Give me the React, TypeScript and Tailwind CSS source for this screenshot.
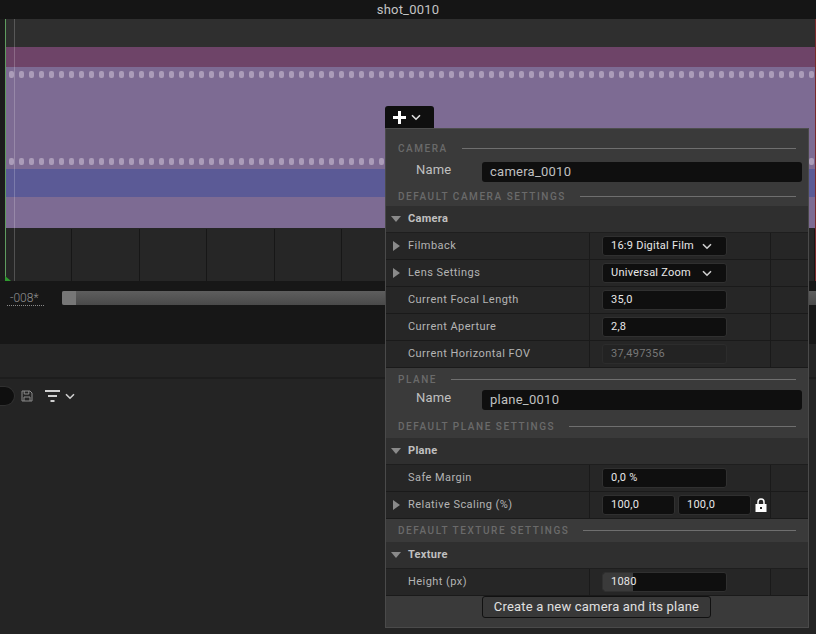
import React from 'react';

const TICKS = [66, 68, 67, 68, 67, 68, 67, 68, 67, 68, 67, 68];
const DOTS = Array.from({ length: 81 });

function Dots() {
  return (
    <div className="flex gap-[5px] pl-[3px] overflow-hidden">
      {DOTS.map((_, i) => (
        <span key={i} className="w-[5px] h-[7px] shrink-0 rounded-[2px] bg-[#ab9cb9]" />
      ))}
    </div>
  );
}

function Arrow({ open }: { open?: boolean }) {
  return (
    <svg width="12" height="12" viewBox="0 0 12 12" className="shrink-0">
      {open ? <path d="M1 3h10L6 9z" fill="#8a8a8a" /> : <path d="M3 1l7 5-7 5z" fill="#8a8a8a" />}
    </svg>
  );
}

function Chevron({ color = '#d0d0d0', w = 10 }: { color?: string; w?: number }) {
  return (
    <svg width={w} height="7" viewBox="0 0 10 7" className="shrink-0">
      <path d="M1 1.2l4 4 4-4" fill="none" stroke={color} strokeWidth="1.6" />
    </svg>
  );
}

function SectionTitle({ text, h, pt = 'pt-0' }: { text: string; h: string; pt?: string }) {
  return (
    <div className={`flex items-center gap-[14px] pl-3 pr-3 ${h} ${pt}`}>
      <span className="text-[10px] font-medium tracking-[1.55px] text-[#6a6a6a] whitespace-nowrap">{text}</span>
      <span className="flex-1 h-px bg-[#6f6f6f]" />
    </div>
  );
}

function NameRow({ value }: { value: string }) {
  return (
    <div className="flex items-start h-[24px] pr-[6px]">
      <span className="w-[96px] pl-[30px] text-[13px] leading-[20px] text-[#c0c0c0] tracking-[0.2px] shrink-0 -mt-[2px]">Name</span>
      <div className="flex-1 h-[20px] rounded-[3px] bg-[#0f0f0f] pl-2 text-[13px] leading-[20px] text-[#c0c0c0] tracking-[0.25px]">{value}</div>
    </div>
  );
}

function GroupHeader({ label, h = 'h-[27px]' }: { label: string; h?: string }) {
  return (
    <div className={`flex items-center ${h} pl-1 bg-[#2f2f2f] border-b border-[#1e1e1e]`}>
      <Arrow open />
      <span className="ml-[6px] text-[11px] font-bold tracking-[0.3px] text-[#c0c0c0]">{label}</span>
    </div>
  );
}

function Field({ children, w = 'w-[125px]', dim }: { children: React.ReactNode; w?: string; dim?: boolean }) {
  return (
    <div className={`flex items-center justify-between h-[20px] ${w} rounded-[3px] border pl-[8px] pr-[14px] text-[11px] tracking-[0.25px] ${dim ? 'bg-[#232323] border-[#2c2c2c] text-[#777]' : 'bg-[#0f0f0f] border-[#303030] text-[#e8e8e8]'}`}>
      {children}
    </div>
  );
}

function Row({ label, arrow, children }: { label: string; arrow?: boolean; children: React.ReactNode }) {
  return (
    <div className="flex h-[27px] bg-[#262626] border-b border-[#1a1a1a]">
      <div className="w-[204px] flex items-center pl-1 border-r border-[#1a1a1a]">
        {arrow ? <Arrow /> : <span className="w-[12px]" />}
        <span className="ml-[6px] text-[11px] tracking-[0.45px] text-[#b4b4b4] whitespace-nowrap">{label}</span>
      </div>
      <div className="w-[181px] flex items-center gap-[3px] pl-3 border-r border-[#1a1a1a]">{children}</div>
    </div>
  );
}

export default function App() {
  return (
    <div className="relative w-[816px] h-[634px] overflow-hidden bg-[#242424] font-['Roboto',sans-serif]">
      <div className="flex items-center justify-center h-[19px] bg-[#151515] text-[13px] text-[#c4c4c4] tracking-[0.2px]">shot_0010</div>

      <div className="relative flex h-[262px] bg-[#1c1c1c]">
        <div className="w-[5px] shrink-0" />
        <div className="w-px shrink-0 bg-[#5f9c5f]" />
        <div className="flex-1 flex flex-col">
          <div className="h-[28px] bg-[#2f2f2f]" />
          <div className="h-[20px] bg-[#6e4468]" />
          <div className="h-[102px] flex flex-col justify-between pt-[4px] pb-[4px] bg-[#7d6b93]">
            <Dots />
            <Dots />
          </div>
          <div className="h-[28px] bg-[#5b5a96]" />
          <div className="h-[31px] bg-[#7d6b93]" />
          <div className="flex h-[53px] bg-[#262626] pt-px">
            {TICKS.map((w, i) => (
              <div key={i} style={{ width: w }} className="shrink-0 border-r border-[#171717]" />
            ))}
          </div>
        </div>
        <div className="w-[3px] shrink-0 bg-[#1c1c1c] border-l border-[#7a2a2a]" />
        <div className="absolute left-[14px] top-0 bottom-0 w-px bg-white/20" />
        <svg width="6" height="5" viewBox="0 0 6 5" className="absolute left-[5px] bottom-0">
          <path d="M0 0l6 5H0z" fill="#2f9a2f" />
        </svg>
      </div>

      <div className="h-[63px] bg-[#171717] pt-[10px]">
        <div className="flex items-start">
          <div className="w-[62px] shrink-0 pl-[7px]">
            <span className="block w-[37px] pl-[3px] text-[12px] leading-[14px] font-light text-[#8f8f8f] border-b border-dotted border-[#8a8a8a]">-008*</span>
          </div>
          <div className="flex-1 h-[14px] rounded-l-[2px] overflow-hidden bg-gradient-to-b from-[#5e5e5e] to-[#4a4a4a]">
            <div className="w-[14px] h-full bg-[#777]" />
          </div>
        </div>
      </div>

      <div className="h-[35px] bg-[#242424] border-b-2 border-[#1d1d1d]" />

      <div className="flex items-center h-[20px] mt-[7px]">
        <div className="w-[15px] h-[20px] rounded-r-full bg-[#0f0f0f] border border-l-0 border-[#303030]" />
        <svg width="12" height="12" viewBox="0 0 12 12" className="ml-[6px]">
          <path d="M1 1h8l2 2v8H1z M3.2 1v3h4.6V1 M3 11V7h6v4" fill="none" stroke="#8a8a8a" strokeWidth="1" />
        </svg>
        <svg width="15" height="12" viewBox="0 0 15 12" className="ml-[12px]">
          <path d="M0 1h15M3 6h9M5.5 11h4" stroke="#d0d0d0" strokeWidth="2" />
        </svg>
        <span className="ml-[5px]"><Chevron /></span>
      </div>

      {/* add menu */}
      <div className="absolute left-[385px] top-[106px] w-[424px]">
        <div className="flex items-center gap-[5px] w-[49px] h-[23px] pl-[8px] rounded-t-[3px] bg-[#0f0f0f]">
          <svg width="13" height="13" viewBox="0 0 13 13">
            <path d="M5 0h3v5h5v3H8v5H5V8H0V5h5z" fill="#fff" />
          </svg>
          <Chevron color="#e0e0e0" />
        </div>

        <div className="border border-[#4a4a4a] border-t-[#4d4d4d] bg-[#3a3a3a] w-[424px] h-[500px] -mt-px">
          <SectionTitle text="CAMERA" h="h-[33px]" pt="pt-[6px]" />
          <NameRow value="camera_0010" />
          <SectionTitle text="DEFAULT CAMERA SETTINGS" h="h-[20px]" />
          <GroupHeader label="Camera" />
          <Row label="Filmback" arrow>
            <Field><span>16:9 Digital Film</span><Chevron /></Field>
          </Row>
          <Row label="Lens Settings" arrow>
            <Field><span>Universal Zoom</span><Chevron /></Field>
          </Row>
          <Row label="Current Focal Length"><Field>35,0</Field></Row>
          <Row label="Current Aperture"><Field>2,8</Field></Row>
          <Row label="Current Horizontal FOV"><Field dim>37,497356</Field></Row>
          <SectionTitle text="PLANE" h="h-[22px]" />
          <NameRow value="plane_0010" />
          <SectionTitle text="DEFAULT PLANE SETTINGS" h="h-[24px]" />
          <GroupHeader label="Plane" />
          <Row label="Safe Margin"><Field>0,0 %</Field></Row>
          <Row label="Relative Scaling (%)" arrow>
            <Field w="w-[73px]">100,0</Field>
            <Field w="w-[73px]">100,0</Field>
            <svg width="12" height="14" viewBox="0 0 12 14" className="ml-[1px]">
              <path d="M3 6V4a3 3 0 0 1 6 0v2" fill="none" stroke="#fff" strokeWidth="1.5" />
              <path d="M0.5 6h11v8h-11z M5 9v2h2V9z" fill="#fff" fillRule="evenodd" />
            </svg>
          </Row>
          <SectionTitle text="DEFAULT TEXTURE SETTINGS" h="h-[23px]" />
          <GroupHeader label="Texture" />
          <Row label="Height (px)">
            <div className="relative w-[125px] h-[20px] rounded-[3px] border border-[#303030] bg-[#0f0f0f] overflow-hidden">
              <div className="h-full w-[30px] bg-[#3a3a3a]" />
              <span className="absolute left-[8px] top-0 text-[11px] leading-[18px] tracking-[0.25px] text-[#e8e8e8]">1080</span>
            </div>
          </Row>
          <div className="flex justify-center pr-[1px]">
            <div className="w-[229px] h-[22px] rounded-[3px] border border-[#111] bg-[#383838] text-center text-[13px] leading-[20px] text-[#e0e0e0] tracking-[0.2px]">
              Create a new camera and its plane
            </div>
          </div>
        </div>
      </div>
    </div>
  );
}
